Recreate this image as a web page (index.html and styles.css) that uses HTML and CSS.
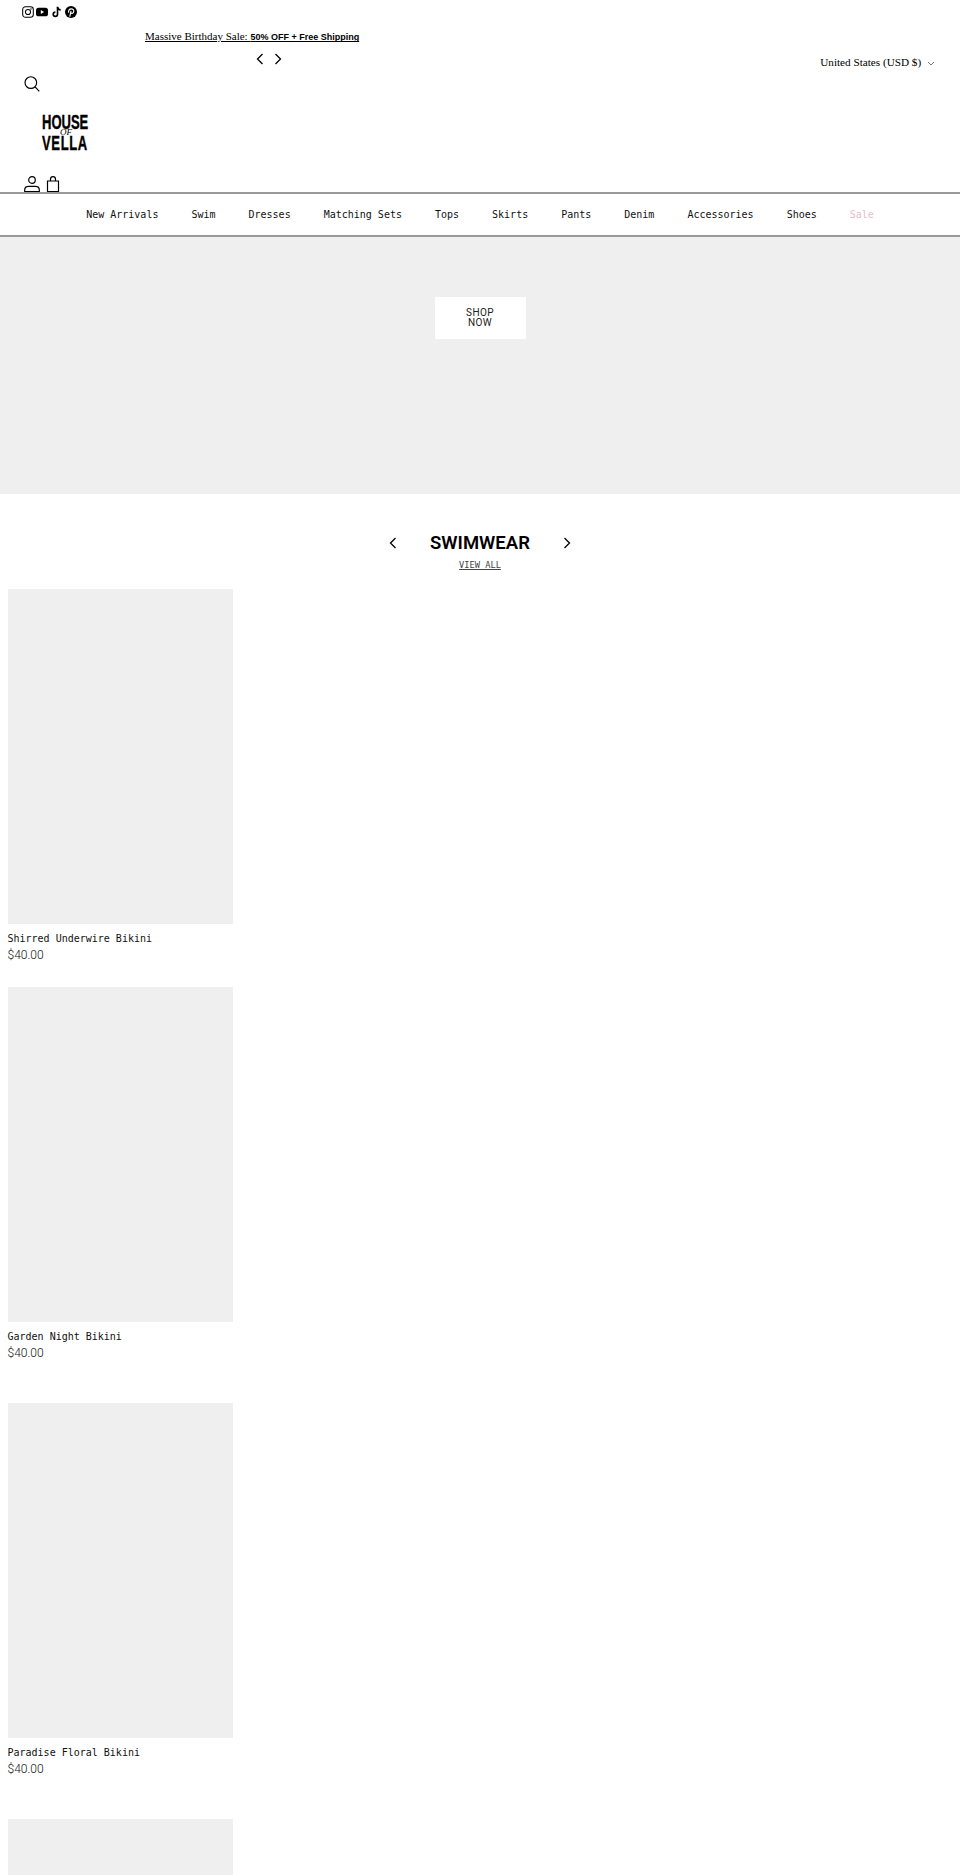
FILE: index.html
```html
<!DOCTYPE html>
<html lang="en">
<head>
  <meta charset="UTF-8" />
  <meta name="viewport" content="width=device-width, initial-scale=1" />
  <title>House of Vella</title>
  <link rel="stylesheet" href="styles.css">
</head>
<body>
  <header class="site-header">
    <div class="header-left">
      <div class="social">
        <svg class="social-icon" viewBox="0 0 14 14" aria-label="Instagram"><rect x=".8" y=".8" width="12.4" height="12.4" rx="3.2" fill="none" stroke="#000" stroke-width="1.2"/><circle cx="7" cy="7" r="3" fill="none" stroke="#000" stroke-width="1.2"/><circle cx="10.5" cy="3.5" r=".8" fill="#000"/></svg>
        <svg class="social-icon" viewBox="0 0 14 14" aria-label="YouTube"><rect x="0" y="2" width="14" height="10" rx="3" fill="#000"/><path d="M5.6 4.8v4.4L9.4 7z" fill="#fff"/></svg>
        <svg class="social-icon" viewBox="0 0 14 14" aria-label="TikTok"><path d="M7.6 1v8.6a2.5 2.5 0 1 1-2.5-2.5" fill="none" stroke="#000" stroke-width="1.9"/><path d="M7.6 1.2c.3 2 1.6 3.2 3.7 3.3" fill="none" stroke="#000" stroke-width="1.9"/></svg>
        <svg class="social-icon" viewBox="0 0 14 14" aria-label="Pinterest"><circle cx="7" cy="7" r="7" fill="#000"/><path d="M5.6 12.4l1.4-6.6M4.5 7.8C3.4 5.8 5 3.4 7.3 3.4c2 0 3.2 1.4 2.9 3.2-.3 1.8-2.4 2.7-3.4 1.3" fill="none" stroke="#fff" stroke-width="1.3"/></svg>
      </div>
      <a class="announce" href="#">Massive Birthday Sale: <strong>50% OFF + Free Shipping</strong></a>
      <div class="announce-arrows">
        <svg class="chevron" viewBox="0 0 10 16"><path d="M7.5 3L2.5 8l5 5"/></svg>
        <svg class="chevron" viewBox="0 0 10 16"><path d="M2.5 3l5 5-5 5"/></svg>
      </div>
      <svg class="icon search-icon" viewBox="0 0 16 16"><circle cx="6.8" cy="6.8" r="6"/><path d="M11.2 11.2l4.3 4.6"/></svg>
      <a class="logo" href="#">
        <span class="logo-line">HOUSE</span>
        <span class="logo-line logo-line-low">VELLA</span>
        <span class="logo-of">OF</span>
      </a>
      <div class="header-icons">
        <svg class="icon" viewBox="0 0 16 16"><circle cx="8" cy="4" r="3.3"/><path d="M.7 15.5V14c0-2.2 1.8-3.6 4-3.6h6.600c2.200 0 4 1.400 4 3.600v1.500z"/></svg>
        <svg class="icon bag-icon" viewBox="0 0 14 16"><path d="M1.500 5h11v10.500h-11zM4.500 5V3.200a2.500 2.500 0 0 1 5 0V5"/></svg>
      </div>
    </div>
    <div class="locale">United States (USD $) <svg class="locale-caret" viewBox="0 0 8 5"><path d="M1 1l3 3 3-3"/></svg></div>
  </header>

  <nav class="main-nav">
    <a href="#">New Arrivals</a>
    <a href="#">Swim</a>
    <a href="#">Dresses</a>
    <a href="#">Matching Sets</a>
    <a href="#">Tops</a>
    <a href="#">Skirts</a>
    <a href="#">Pants</a>
    <a href="#">Denim</a>
    <a href="#">Accessories</a>
    <a href="#">Shoes</a>
    <a class="sale" href="#">Sale</a>
  </nav>

  <section class="hero">
    <a class="shop-btn" href="#">SHOP NOW</a>
  </section>

  <section class="collection">
    <div class="collection-head">
      <svg class="chevron" viewBox="0 0 10 16"><path d="M7.5 3L2.5 8l5 5"/></svg>
      <h2>SWIMWEAR</h2>
      <svg class="chevron" viewBox="0 0 10 16"><path d="M2.5 3l5 5-5 5"/></svg>
    </div>
    <a class="view-all" href="#">VIEW ALL</a>

    <div class="products">
      <article class="product first">
        <div class="product-img"></div>
        <div class="product-name">Shirred Underwire Bikini</div>
        <div class="product-price">$40.00</div>
      </article>
      <article class="product">
        <div class="product-img"></div>
        <div class="product-name">Garden Night Bikini</div>
        <div class="product-price">$40.00</div>
      </article>
      <article class="product">
        <div class="product-img"></div>
        <div class="product-name">Paradise Floral Bikini</div>
        <div class="product-price">$40.00</div>
      </article>
      <article class="product">
        <div class="product-img"></div>
      </article>
    </div>
  </section>
</body>
</html>
```

FILE: styles.css
```css
:root {
  --grey-block: #efefef;
  --mono: "DejaVu Sans Mono", monospace;
}
html, body {
  height: 1875px;
  overflow: hidden;
}
body {
  margin: 0;
  background: #fff;
  color: #000;
  font-family: var(--mono);
}
a {
  color: inherit;
  text-decoration: none;
}

.site-header {
  display: flex;
  height: 192px;
}
.header-left {
  flex: 1;
  display: flex;
  flex-direction: column;
  align-items: flex-start;
}
.social {
  display: flex;
  gap: 2.4px;
  padding: 6px 0 0 22px;
  height: 18px;
}
.social-icon {
  width: 12px;
  height: 12px;
}
.announce {
  margin: 5px 0 0 145px;
  font-family: "Liberation Serif", serif;
  font-size: 11px;
  line-height: 16px;
  text-decoration: underline;
}
.announce strong {
  font-family: "Liberation Sans", sans-serif;
  font-size: 9px;
}
.announce-arrows {
  display: flex;
  gap: 8px;
  margin: 6px 0 0 255px;
}
.chevron {
  width: 10px;
  height: 16px;
  fill: none;
  stroke: #000;
  stroke-width: 1.3;
}
.icon {
  width: 16px;
  height: 16px;
  fill: none;
  stroke: #000;
  stroke-width: 1.2;
}
.search-icon {
  margin: 9px 0 0 24px;
}
.logo {
  position: relative;
  display: block;
  margin: 23px 0 0 42px;
  width: 46px;
  height: 35px;
  font-family: "Liberation Sans", sans-serif;
  font-weight: 700;
  font-size: 20px;
  line-height: 14px;
  -webkit-text-stroke: .4px #000;
}
.logo-line {
  display: block;
  transform: scaleX(.65);
  transform-origin: left;
  white-space: nowrap;
}
.logo-line-low {
  margin-top: 7px;
  letter-spacing: 1px;
}
.logo-of {
  position: absolute;
  left: 18px;
  top: 14px;
  font-family: "Liberation Serif", serif;
  font-style: italic;
  font-weight: 400;
  font-size: 9px;
  line-height: 7px;
  -webkit-text-stroke: 0;
}
.header-icons {
  display: flex;
  gap: 6px;
  margin: 26px 0 0 24px;
}
.bag-icon {
  width: 14px;
}
.locale {
  padding: 54px 25px 0 0;
  font-family: "Liberation Serif", serif;
  font-size: 11.2px;
  line-height: 16px;
  white-space: nowrap;
}
.locale-caret {
  width: 8px;
  height: 5px;
  margin-left: 3px;
  fill: none;
  stroke: #555;
  stroke-width: .8;
}

.main-nav {
  display: flex;
  justify-content: center;
  align-items: center;
  gap: 33px;
  height: 41px;
  border-top: 2px solid #999;
  border-bottom: 2px solid #999;
  font-size: 10px;
  color: #111;
}
.main-nav .sale {
  color: #e6bccf;
}

.hero {
  display: flex;
  justify-content: center;
  align-items: flex-start;
  height: 197px;
  padding-top: 60px;
  background: var(--grey-block);
}
.shop-btn {
  width: 31px;
  padding: 11px 30px;
  background: #fff;
  color: #222;
  font-family: Roboto, sans-serif;
  font-size: 10px;
  letter-spacing: .4px;
  line-height: 10px;
  text-align: center;
}

.collection-head {
  display: flex;
  justify-content: center;
  align-items: center;
  gap: 32px;
  padding-top: 37px;
}
.collection-head h2 {
  margin: 0;
  font-family: Roboto, sans-serif;
  font-size: 18.5px;
  line-height: 24px;
  font-weight: 600;
}
.view-all {
  display: block;
  width: max-content;
  margin: 4px auto 18px;
  font-size: 8.7px;
  line-height: 12px;
  color: #444;
  text-decoration: underline;
}

.products {
  padding-left: 7.5px;
  width: 225px;
}
.product {
  margin-bottom: 42px;
}
.product.first {
  margin-bottom: 24px;
}
.product-img {
  height: 335px;
  background: var(--grey-block);
}
.product-name,
.product-price {
  line-height: 16px;
  color: #111;
}
.product-name {
  margin-top: 7px;
  font-size: 10px;
}
.product-price {
  font-family: Roboto, sans-serif;
  font-weight: 300;
  font-size: 12px;
}
```
